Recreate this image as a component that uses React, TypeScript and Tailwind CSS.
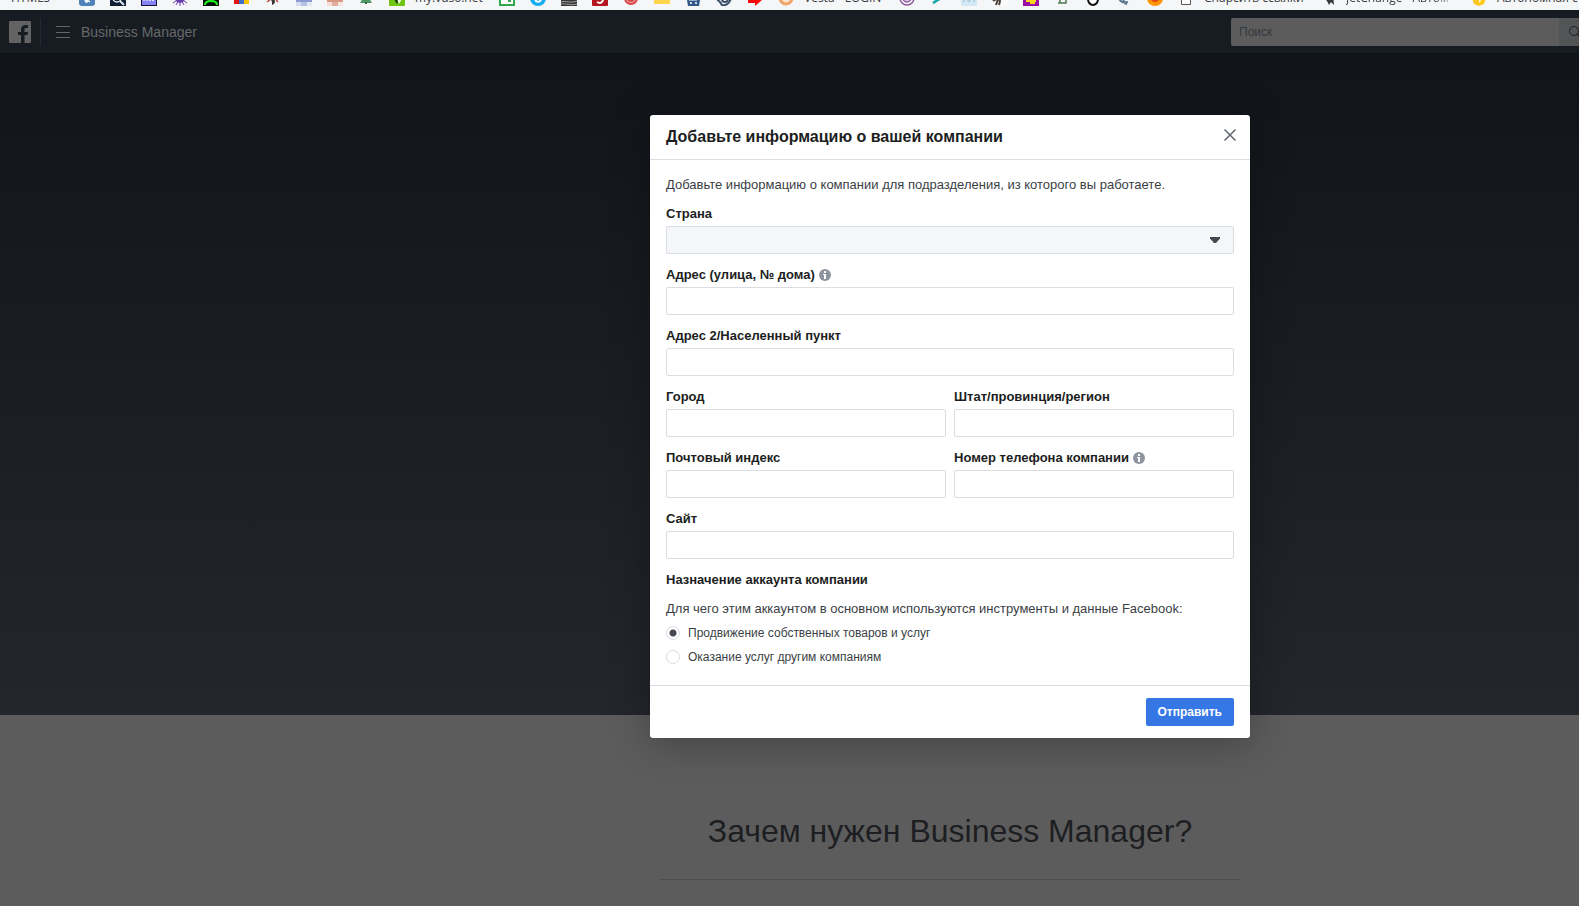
import { useState } from 'react';
import type { ReactNode } from 'react';

type Bookmark = {
  name: string;
  icon?: ReactNode;
  label?: string;
  labelClass?: string;
};

const bookmarks: Bookmark[] = [
  { name: 'html5', label: 'HTML5', labelClass: 'w-[53px]' },
  {
    name: 'vk',
    icon: (
      <>
        <rect width="16" height="16" rx="3" fill="#4f82b8" />
        <path d="M5 8l2 4h1V8M8 10l3-2M8 10l3 2" stroke="#fff" strokeWidth="1.500" fill="none" />
      </>
    ),
  },
  {
    name: 'search',
    icon: (
      <>
        <rect width="16" height="16" fill="#122036" />
        <circle cx="7" cy="8" r="4" fill="none" stroke="#dfe5ee" strokeWidth="1.500" />
        <path d="M10 11l4 4" stroke="#dfe5ee" strokeWidth="2" />
      </>
    ),
  },
  {
    name: 'inv',
    icon: (
      <>
        <rect x="0.500" y="0.500" width="15" height="15" fill="#8583f5" stroke="#17152e" />
        <path d="M3 7v4M6 11V7l3 4V7M11 7l1 4 1-4" stroke="#fff" fill="none" />
      </>
    ),
  },
  {
    name: 'virus',
    icon: (
      <>
        <circle cx="8" cy="8" r="5" fill="#6a3fae" />
        <path d="M8 8v8M8 8l4 7M8 8l-4 7M8 8l7 5M8 8l-7 5" stroke="#6a3fae" />
      </>
    ),
  },
  {
    name: 'alien',
    icon: (
      <>
        <rect width="16" height="16" fill="#061006" />
        <path d="M2 15c0-3 2-4 6-4s6 1 6 4" stroke="#1cf51c" strokeWidth="2" fill="none" />
      </>
    ),
  },
  {
    name: 'blocks',
    icon: (
      <>
        <path d="M0 5h6v9H0z" fill="#e21313" />
        <path d="M5 5h5v9H5z" fill="#3f6fc4" />
        <path d="M10 5h5v9h-5z" fill="#fbc400" />
      </>
    ),
  },
  {
    name: 'bird',
    icon: (
      <>
        <path d="M5 7h4l1 5-1 2-2 1v-3z" fill="#3a3634" />
        <path d="M2 12l3-2M11 10l2 2" stroke="#c44b45" strokeWidth="1.500" />
      </>
    ),
  },
  {
    name: 'mosaic-blue',
    icon: (
      <>
        <path d="M0 4h16v8H0z" fill="#8a9cd2" />
        <path d="M0 12h5v4H0z" fill="#d8def0" />
        <path d="M5 12h6v4H5z" fill="#b4c1e4" />
        <path d="M11 12h5v4h-5z" fill="#e3e7f3" />
      </>
    ),
  },
  {
    name: 'mosaic-red',
    icon: (
      <>
        <path d="M0 4h16v8H0z" fill="#d99a85" />
        <path d="M0 12h5v4H0z" fill="#f3ddd6" />
        <path d="M5 12h6v4H5z" fill="#e2ad9c" />
        <path d="M11 12h5v4h-5z" fill="#f5e5e0" />
      </>
    ),
  },
  {
    name: 'tree',
    icon: (
      <>
        <path d="M8 3l6 10H2z" fill="#4d9863" />
        <path d="M7 12h2v2H7z" fill="#35633f" />
      </>
    ),
  },
  {
    name: 'vds',
    label: 'my.vds6.net',
    labelClass: 'w-[69px]',
    icon: (
      <>
        <rect width="16" height="16" rx="1" fill="#6fc516" />
        <path d="M3 6l5 8 4-8" fill="#173a08" />
        <path d="M8 9l2 5 4-7" fill="#f3ffe5" />
      </>
    ),
  },
  {
    name: 'green-box',
    icon: (
      <>
        <rect x="1" y="1" width="14" height="14" fill="#fff" stroke="#2fa84f" strokeWidth="2" />
        <path d="M9 10h3v2H9z" fill="#2fa84f" />
      </>
    ),
  },
  {
    name: 'skype',
    icon: (
      <>
        <circle cx="8" cy="8" r="8" fill="#12aef0" />
        <path d="M5 10c2 3 6 2 6-1" stroke="#fff" strokeWidth="2" fill="none" />
      </>
    ),
  },
  {
    name: 'photo',
    icon: (
      <>
        <rect width="16" height="16" fill="#363636" />
        <path d="M0 12c5-2 9 2 16-1M0 14c5-1 9 2 16 0" stroke="#a5a5a5" fill="none" />
      </>
    ),
  },
  {
    name: 'red-nine',
    icon: (
      <>
        <rect width="16" height="16" rx="1" fill="#b3161f" />
        <path d="M5 12c3 2 7 1 6-6" stroke="#fff" strokeWidth="2" fill="none" />
      </>
    ),
  },
  {
    name: 'target',
    icon: (
      <>
        <circle cx="8" cy="8" r="6" fill="#f2b6b2" stroke="#d7474a" strokeWidth="2" />
        <circle cx="8" cy="8" r="3" fill="none" stroke="#d7474a" strokeWidth="2" />
      </>
    ),
  },
  { name: 'folder', icon: <path d="M0 3h16v11H0z" fill="#ffd54d" /> },
  {
    name: 'cart',
    icon: (
      <>
        <path d="M1 4h15l-2 12H3z" fill="#33598c" />
        <path d="M4 10h8" stroke="#fff" strokeWidth="1" />
        <circle cx="6" cy="13" r="1" fill="#fff" />
        <circle cx="11" cy="13" r="1" fill="#fff" />
      </>
    ),
  },
  {
    name: 'swirl',
    icon: (
      <>
        <path d="M1 10c2 0 3 2 5 5 5 1 9-3 9-9" stroke="#3b4f6b" strokeWidth="2" fill="none" />
        <circle cx="9" cy="9" r="3" fill="none" stroke="#3b4f6b" strokeWidth="2" />
      </>
    ),
  },
  { name: 'arrow', icon: <path d="M1 7h7V3l7 7-7 6v-3H1z" fill="#f80b0b" /> },
  {
    name: 'vesta',
    label: 'Vesta - LOGIN',
    labelClass: 'w-20',
    icon: <circle cx="8" cy="8" r="6" fill="#fde3c9" stroke="#f0a568" strokeWidth="3" />,
  },
  {
    name: 'spiral',
    icon: (
      <>
        <circle cx="8" cy="8" r="7" fill="none" stroke="#8f5b9f" strokeWidth="1.500" />
        <circle cx="8" cy="8" r="4" fill="#dcc3e3" stroke="#8f5b9f" strokeWidth="1.500" />
      </>
    ),
  },
  { name: 'slash', icon: <path d="M11 8l-8 5" stroke="#10a5a5" strokeWidth="2.500" /> },
  {
    name: 'mountains',
    icon: (
      <>
        <rect width="16" height="16" fill="#d3e9f3" />
        <path d="M2 12l3-4 3 4 3-4 3 4" stroke="#92bfd6" fill="none" />
      </>
    ),
  },
  {
    name: 'runner',
    icon: (
      <>
        <rect width="16" height="16" fill="#fafafa" />
        <path d="M1 11l5-3 2 3-1 4M6 9l-2 6" stroke="#4e4038" strokeWidth="2" fill="none" />
      </>
    ),
  },
  {
    name: 'key',
    icon: (
      <>
        <rect width="16" height="16" fill="#9a0da6" />
        <path d="M3 11h10M7 13h5" stroke="#ffd51f" strokeWidth="2" />
      </>
    ),
  },
  { name: 'letter', icon: <path d="M6 5v8M4 13h8v-3" stroke="#4f7a53" strokeWidth="1.500" fill="none" /> },
  { name: 'ring', icon: <ellipse cx="8" cy="9" rx="5" ry="6" fill="#fff" stroke="#111" strokeWidth="2" /> },
  {
    name: 'elephant',
    icon: <path d="M3 8c1 4 4 5 9 4M8 8c-1 3 0 6 3 6" stroke="#5d7993" strokeWidth="2" fill="none" />,
  },
  {
    name: 'firefox',
    icon: (
      <>
        <circle cx="8" cy="8" r="8" fill="#ff9500" />
        <circle cx="8" cy="8" r="4" fill="#e2470f" />
      </>
    ),
  },
  {
    name: 'parser',
    label: 'Спарсить ссылки',
    labelClass: 'w-[101px]',
    icon: <path d="M3.500 3.500h9v11h-9z" fill="#fff" stroke="#555" />,
  },
  {
    name: 'jetchange',
    label: 'JetChange - Автом',
    labelClass: 'w-[110px] mask-r-from-80%',
    icon: <path d="M3 7l10-3 1 11-3-3-2 3-2-4z" fill="#33373b" />,
  },
  {
    name: 'auto',
    label: 'Автономная с',
    labelClass: 'w-[120px]',
    icon: (
      <>
        <path d="M1 8l3-6h8l3 6-2 6-5 2-5-2z" fill="#fbc91c" />
        <path d="M8 8l2 3-2 2" fill="#fff6d5" />
      </>
    ),
  },
];

function BookmarksBar() {
  return (
    <nav className="flex h-2.5 items-end gap-[15px] overflow-hidden bg-[#f5f6f7] pb-1 pl-[11px] font-['Open_Sans',sans-serif] text-xs leading-4 text-[#3c4043]">
      {bookmarks.map((b) => (
        <a key={b.name} href={`#${b.name}`} aria-label={b.name} className="flex shrink-0 items-end gap-2.5">
          {b.icon && (
            <svg viewBox="0 0 16 16" className="size-4 shrink-0">
              {b.icon}
            </svg>
          )}
          {b.label && <span className={`whitespace-nowrap ${b.labelClass}`}>{b.label}</span>}
        </a>
      ))}
    </nav>
  );
}

function Header() {
  return (
    <header className="flex h-11 items-center border-b border-[#0c0f13] bg-[#171c22] pl-[9px]">
      <a href="#home" aria-label="Facebook">
        <svg viewBox="0 0 22 22" className="size-[22px]">
          <rect width="22" height="22" rx="1" fill="#636363" />
          <path
            d="M12 22v-8H9v-3h3V8.500C12 5.600 13.700 4 16.300 4H19v3.100h-1.700c-1.400 0-1.800.6-1.800 1.700V11H19l-.5 3h-3v8z"
            fill="#171c22"
          />
        </svg>
      </a>
      <div className="ml-[9px] h-7 w-px bg-[#222830]" />
      <button aria-label="Меню" className="ml-[15px]">
        <svg viewBox="0 0 14 12" className="h-3 w-3.5">
          <path d="M0 0.500h14M0 6.500h14M0 11.500h14" stroke="#636567" />
        </svg>
      </button>
      <span className="ml-[11px] text-sm text-[#66686a]">Business Manager</span>
      <form className="ml-auto flex h-7 w-[348px]" onSubmit={(e) => e.preventDefault()}>
        <input
          type="text"
          aria-label="Поиск"
          placeholder="Поиск"
          className="min-w-0 flex-1 rounded-l-xs bg-[#5c5c5c] px-2 text-xs text-[#1c1e21] outline-none placeholder:text-[#35383c]"
        />
        <button aria-label="Найти" className="w-5 overflow-hidden bg-[#525456] pl-2.5">
          <svg viewBox="0 0 12 12" className="size-3">
            <circle cx="5" cy="5" r="4.500" fill="none" stroke="#1f2226" />
            <path d="M8 8l3.500 3.500" stroke="#1f2226" strokeWidth="1.500" />
          </svg>
        </button>
      </form>
    </header>
  );
}

function InfoIcon() {
  return (
    <svg viewBox="0 0 12 12" className="size-3">
      <circle cx="6" cy="6" r="6" fill="#8d949e" />
      <path d="M5 2h2v2H5zM4 5h3v5H5V6H4z" fill="#fff" />
    </svg>
  );
}

function Field({ id, label, info }: { id: string; label: string; info?: boolean }) {
  return (
    <div className="flex flex-col gap-1">
      <label htmlFor={id} className="flex items-center gap-1 font-bold leading-4 text-[#1c1e21]">
        {label}
        {info && <InfoIcon />}
      </label>
      <input
        id={id}
        type="text"
        className="h-7 w-full rounded-xs border border-[#dadde1] bg-white px-2 text-xs outline-none focus:border-[#3578e5]"
      />
    </div>
  );
}

const purposes = [
  { value: 'own', label: 'Продвижение собственных товаров и услуг' },
  { value: 'agency', label: 'Оказание услуг другим компаниям' },
];

function CompanyDialog() {
  const [purpose, setPurpose] = useState('own');

  return (
    <form
      role="dialog"
      aria-labelledby="dialog-title"
      onSubmit={(e) => e.preventDefault()}
      className="w-full max-w-[600px] rounded-[3px] bg-white text-[13px] text-[#3b3f45] shadow-[0_4px_40px_rgba(0,0,0,0.3)]"
    >
      <div className="flex h-[45px] items-center justify-between border-b border-[#dadde1] pr-3.5 pl-4">
        <h2 id="dialog-title" className="text-base font-bold text-[#1c1e21]">
          Добавьте информацию о вашей компании
        </h2>
        <button type="button" aria-label="Закрыть" className="pb-1">
          <svg viewBox="0 0 12 12" className="size-3">
            <path d="M0.500 0.500l11 11M11.500 0.500l-11 11" stroke="#606770" strokeWidth="1.500" />
          </svg>
        </button>
      </div>

      <div className="px-4 pt-4 pb-5">
        <p className="leading-[18px]">Добавьте информацию о компании для подразделения, из которого вы работаете.</p>

        <div className="mt-3 flex flex-col gap-[13px]">
          <div className="flex flex-col gap-1">
            <label htmlFor="country" className="font-bold leading-4 text-[#1c1e21]">
              Страна
            </label>
            <div className="relative">
              <select
                id="country"
                className="block h-7 w-full appearance-none rounded-xs border border-[#dadde1] bg-[#f5f6f7] px-2 text-xs outline-none"
              >
                <option></option>
              </select>
              <svg viewBox="0 0 10 6" className="pointer-events-none absolute top-[11px] right-3.5 h-1.5 w-2.5">
                <path d="M0 0h10v1.500L6 6H4L0 1.500z" fill="#444950" />
              </svg>
            </div>
          </div>
          <Field id="street" label="Адрес (улица, № дома)" info />
          <Field id="street2" label="Адрес 2/Населенный пункт" />
          <div className="grid grid-cols-2 gap-x-2 gap-y-[13px]">
            <Field id="city" label="Город" />
            <Field id="state" label="Штат/провинция/регион" />
            <Field id="zip" label="Почтовый индекс" />
            <Field id="phone" label="Номер телефона компании" info />
          </div>
          <Field id="site" label="Сайт" />
          <h3 className="font-bold leading-4 text-[#1c1e21]">Назначение аккаунта компании</h3>
        </div>

        <p className="mt-3 leading-[18px]">
          Для чего этим аккаунтом в основном используются инструменты и данные Facebook:
        </p>
        <div className="mt-[7px] flex flex-col gap-2 text-xs leading-4">
          {purposes.map((p) => (
            <label key={p.value} className="flex items-center gap-2">
              <input
                type="radio"
                name="purpose"
                value={p.value}
                checked={purpose === p.value}
                onChange={() => setPurpose(p.value)}
                className="size-3.5 appearance-none rounded-full border border-[#dadde1] bg-white checked:bg-[radial-gradient(circle,#444950_3px,#fff_4px)]"
              />
              {p.label}
            </label>
          ))}
        </div>
      </div>

      <div className="flex justify-end border-t border-[#dadde1] px-4 py-3">
        <button type="submit" className="h-7 rounded-xs bg-[#3578e5] px-3 text-xs font-bold text-white">
          Отправить
        </button>
      </div>
    </form>
  );
}

export default function App() {
  return (
    <div className="relative flex min-h-screen flex-col overflow-x-hidden bg-[#5c5c5c] font-['Liberation_Sans',Arial,sans-serif]">
      <BookmarksBar />
      <Header />
      <section className="h-[661px] bg-linear-to-b from-[#111519] to-[#23262b]" />
      <section className="flex justify-center pt-24 pl-[321px]">
        <h1 className="w-[580px] border-b border-[#4c4d4e] pb-7 text-center text-[32px] leading-10 text-[#1c1e21]">
          Зачем нужен Business Manager?
        </h1>
      </section>

      {/* dialog over the dimmed page */}
      <div className="absolute inset-x-0 top-0 flex justify-center pt-[115px] pl-[321px]">
        <CompanyDialog />
      </div>
    </div>
  );
}
